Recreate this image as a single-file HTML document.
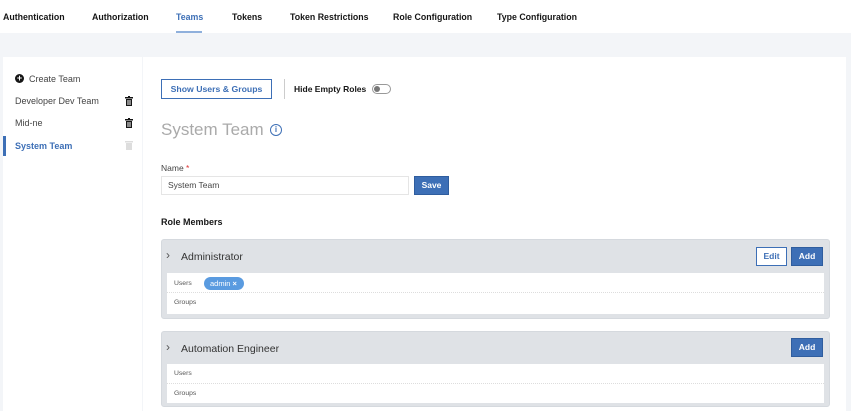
<!DOCTYPE html>
<html><head><style>
*{margin:0;padding:0;box-sizing:border-box}
body{width:851px;height:411px;overflow:hidden;background:#f3f5f8;font-family:"Liberation Sans",sans-serif;position:relative;color:#161616}
.a{position:absolute}
.nav{left:0;top:0;width:851px;height:33px;background:#fff}
.nav span{position:absolute;top:12px;font-size:8.8px;font-weight:bold;color:#161616}
.btnp{background:#3d6fb6;color:#fff;font-weight:bold;font-size:8.5px;text-align:center;border:1px solid #2f5d9e}
.card{left:161px;width:669px;background:#dfe2e6;border-radius:3px;border:1px solid #d5d9de}
.body{background:#fff;left:5px;right:5px}
.row{position:absolute;left:0;right:0;height:20px;font-size:6.8px;color:#555;padding-left:7px;line-height:20px}
</style></head><body>
<div class="a nav">
<span style="left:3px">Authentication</span>
<span style="left:92px">Authorization</span>
<span style="left:176px;color:#3d6fb6">Teams</span>
<div class="a" style="left:176px;top:31px;width:26px;height:2px;background:#8fb0dc"></div>
<span style="left:232px">Tokens</span>
<span style="left:290px">Token Restrictions</span>
<span style="left:393px">Role Configuration</span>
<span style="left:497px">Type Configuration</span>
</div>
<div class="a" style="left:3px;top:57px;width:139px;height:354px;background:#fff"></div>
<div class="a" style="left:143px;top:57px;width:703px;height:354px;background:#fff"></div>
<div class="a" style="left:15px;top:74px;width:9px;height:9px;border-radius:50%;background:#161616;color:#fff;font-size:9px;line-height:9px;text-align:center;font-weight:bold">+</div>
<div class="a" style="left:29px;top:74px;font-size:9px;color:#444">Create Team</div>
<div class="a" style="left:15px;top:96px;font-size:9px;color:#444">Developer Dev Team</div>
<div class="a" style="left:15px;top:118px;font-size:9px;color:#444">Mid-ne</div>
<div class="a" style="left:3px;top:136px;width:3px;height:20px;background:#3d6fb6"></div>
<div class="a" style="left:15px;top:141px;font-size:9px;color:#3d6fb6;font-weight:bold">System Team</div>
<svg class="a" style="left:125px;top:96px" width="8" height="10"><rect x="0" y="1" width="8" height="1.5" fill="#161616"/><rect x="3" y="0" width="2" height="1" fill="#161616"/><rect x="1" y="3" width="6" height="7" fill="#161616"/><rect x="2.5" y="4" width="1" height="5" fill="#fff"/><rect x="4.5" y="4" width="1" height="5" fill="#fff"/></svg>
<svg class="a" style="left:125px;top:118px" width="8" height="10"><rect x="0" y="1" width="8" height="1.5" fill="#161616"/><rect x="3" y="0" width="2" height="1" fill="#161616"/><rect x="1" y="3" width="6" height="7" fill="#161616"/><rect x="2.5" y="4" width="1" height="5" fill="#fff"/><rect x="4.5" y="4" width="1" height="5" fill="#fff"/></svg>
<svg class="a" style="left:125px;top:140px" width="8" height="10"><rect x="0" y="1" width="8" height="1.5" fill="#ddd"/><rect x="1" y="3" width="6" height="7" fill="#ddd"/></svg>
<div class="a" style="left:161px;top:79px;width:111px;height:20px;border:1px solid #3d6fb6;color:#3d6fb6;font-weight:bold;font-size:8.7px;text-align:center;line-height:18px">Show Users &amp; Groups</div>
<div class="a" style="left:284px;top:79px;width:1px;height:20px;background:#ccc"></div>
<div class="a" style="left:294px;top:84px;font-size:8.5px;font-weight:bold">Hide Empty Roles</div>
<div class="a" style="left:372px;top:84px;width:19px;height:10px;border:1px solid #999;border-radius:5px"><div style="position:absolute;left:1px;top:1px;width:6px;height:6px;border-radius:50%;background:#777"></div></div>
<div class="a" style="left:161px;top:120px;font-size:17px;color:#aaa">System Team</div>
<div class="a" style="left:270px;top:124px;width:12px;height:12px;border:1.3px solid #3d6fb6;border-radius:50%;color:#3d6fb6;font-size:8px;text-align:center;line-height:10px;font-weight:bold">i</div>
<div class="a" style="left:161px;top:163px;font-size:8.5px;color:#444">Name <span style="color:#d33">*</span></div>
<div class="a" style="left:161px;top:176px;width:248px;height:19px;border:1px solid #e5e5e5;font-size:8.5px;color:#444;padding-left:6px;line-height:17px">System Team</div>
<div class="a btnp" style="left:414px;top:176px;width:35px;height:19px;line-height:17px">Save</div>
<div class="a" style="left:161px;top:217px;font-size:9px;font-weight:bold">Role Members</div>
<div class="a card" style="top:239px;height:80px">
<div class="a" style="left:4px;top:8px;font-size:12px;color:#555">›</div>
<div class="a" style="left:19px;top:11px;font-size:10.5px;color:#333">Administrator</div>
<div class="a" style="left:594px;top:7px;width:31px;height:19px;background:#fff;border:1px solid #3d6fb6;color:#3d6fb6;font-weight:bold;font-size:8.5px;text-align:center;line-height:17px">Edit</div>
<div class="a btnp" style="left:629px;top:7px;width:32px;height:19px;line-height:17px">Add</div>
<div class="a body" style="top:33px;height:41px">
<div class="row" style="top:0;border-bottom:1px dotted #ddd;line-height:22px">Users</div>
<div class="row" style="top:20px">Groups</div>
<div class="a" style="left:37px;top:4px;width:40px;height:13px;background:#5a9be0;border-radius:7px;color:#fff;font-size:7.5px;line-height:13px;padding-left:6px">admin <b>×</b></div>
</div></div>
<div class="a card" style="top:331px;height:76px">
<div class="a" style="left:4px;top:8px;font-size:12px;color:#555">›</div>
<div class="a" style="left:19px;top:11px;font-size:10.5px;color:#333">Automation Engineer</div>
<div class="a btnp" style="left:629px;top:6px;width:32px;height:19px;line-height:17px">Add</div>
<div class="a body" style="top:32px;height:39px">
<div class="row" style="top:0;border-bottom:1px dotted #ddd">Users</div>
<div class="row" style="top:20px">Groups</div>
</div></div>
</body></html>
